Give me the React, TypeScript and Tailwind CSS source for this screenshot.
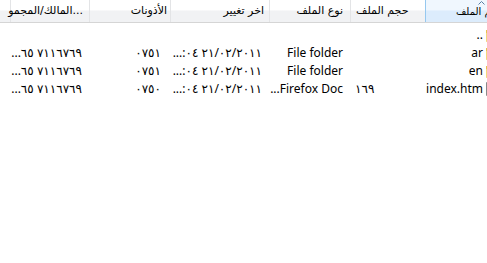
import React from "react";

const FONT = "font-['Noto_Sans','DejaVu_Sans',sans-serif]";
const AR = "font-['DejaVu_Sans',sans-serif]";

type Row = {
  name: string;
  icon: "up" | "folder" | "file";
  size?: string;
  type?: string;
  modified?: string;
  perms?: string;
  owner?: string;
};

const rows: Row[] = [
  { name: "..", icon: "up" },
  {
    name: "ar",
    icon: "folder",
    type: "File folder",
    modified: "...:٠٤ ٢١/٠٢/٢٠١١",
    perms: "٠٧٥١",
    owner: "...٦٥ ٧١١٦٧٦٩",
  },
  {
    name: "en",
    icon: "folder",
    type: "File folder",
    modified: "...:٠٤ ٢١/٠٢/٢٠١١",
    perms: "٠٧٥١",
    owner: "...٦٥ ٧١١٦٧٦٩",
  },
  {
    name: "index.htm",
    icon: "file",
    size: "١٦٩",
    type: "...Firefox Doc",
    modified: "...:٠٤ ٢١/٠٢/٢٠١١",
    perms: "٠٧٥٠",
    owner: "...٦٥ ٧١١٦٧٦٩",
  },
];

// Small file-type icon, only a sliver shows at the right edge
const FileIcon: React.FC<{ kind: Row["icon"] }> = ({ kind }) => {
  if (kind === "file") {
    return (
      <svg width="16" height="16" viewBox="0 0 16 16" className="shrink-0">
        <path d="M1.5 1.5h8l3 3v10h-11z" fill="#fff" stroke="#8a8a8a" />
      </svg>
    );
  }
  return (
    <svg width="16" height="16" viewBox="0 0 16 16" className="shrink-0">
      <path d="M1 3h5l1.5 1.5H15v10H1z" fill="#e9c04e" />
      <path d="M1 6h14v8.5H1z" fill="#f4d77a" />
    </svg>
  );
};

const headerCell =
  "h-full flex items-center border-l border-[#e3e4e6] shrink-0 whitespace-nowrap";

const App: React.FC = () => {
  return (
    <div className={`w-[487px] h-[263px] overflow-hidden bg-white ${FONT}`}>
      <div className="w-[545px]">
        {/* Column header */}
        <div className="flex h-[23px] border-b border-[#d5d5d5] bg-[linear-gradient(#ffffff_0%,#ffffff_45%,#f1f2f4_50%,#f1f2f4_100%)] text-[11px] text-black">
          <div className="w-[10px] shrink-0" />
          <div className={`${headerCell} w-[79px] justify-end pr-[6px] ${AR}`}>
            <span dir="ltr">المالك/المجمو...</span>
          </div>
          <div className={`${headerCell} w-[81px] justify-end pr-[3px] ${AR}`}>
            <span dir="rtl">الأذونات</span>
          </div>
          <div className={`${headerCell} w-[99px] justify-end pr-[5px] ${AR}`}>
            <span dir="rtl">اخر تغيير</span>
          </div>
          <div className={`${headerCell} w-[81px] justify-end pr-[7px] ${AR}`}>
            <span dir="rtl">نوع الملف</span>
          </div>
          <div className={`${headerCell} w-[75px] justify-start pl-[5px] ${AR}`}>
            <span dir="rtl">حجم الملف</span>
          </div>
          <div className="relative h-full w-[120px] shrink-0 flex items-center pl-[30px] border-l border-[#96c8ef] bg-[linear-gradient(#f0f7fe_0%,#f0f7fe_45%,#dcecfc_50%,#dcecfc_100%)] whitespace-nowrap">
            <svg width="7" height="4" viewBox="0 0 7 4" className="absolute left-[52px] top-[1px]">
              <path d="M0.5 3.5L3.5 0.5L6.5 3.5" fill="none" stroke="#5a7fa3" />
            </svg>
            <span dir="rtl" className={`${AR} text-[10px]`}>اسم الملف</span>
          </div>
        </div>

        {/* Rows */}
        <div className="pt-[3px] text-[12px] text-black">
          {rows.map((r) => (
            <div key={r.name} className="flex h-[18px] items-center whitespace-nowrap">
              <div className="w-[10px] shrink-0" />
              <div className="w-[79px] shrink-0 flex justify-end pr-[7px]">
                {r.owner && <bdo dir="ltr">{r.owner}</bdo>}
              </div>
              <div className="w-[81px] shrink-0 flex justify-end pr-[9px]">
                {r.perms && <bdo dir="ltr">{r.perms}</bdo>}
              </div>
              <div className="w-[99px] shrink-0 flex justify-end pr-[7px]">
                {r.modified && <bdo dir="ltr">{r.modified}</bdo>}
              </div>
              <div className="w-[81px] shrink-0 flex justify-end pr-[7px]">
                {r.type && <bdo dir="ltr">{r.type}</bdo>}
              </div>
              <div className="w-[75px] shrink-0 flex justify-start pl-[5px]">
                {r.size && <bdo dir="ltr">{r.size}</bdo>}
              </div>
              <div className="w-[120px] shrink-0 flex items-center justify-end gap-[2px] pr-[44px]">
                <span>{r.name}</span>
                <FileIcon kind={r.icon} />
              </div>
            </div>
          ))}
        </div>
      </div>
    </div>
  );
};

export default App;
